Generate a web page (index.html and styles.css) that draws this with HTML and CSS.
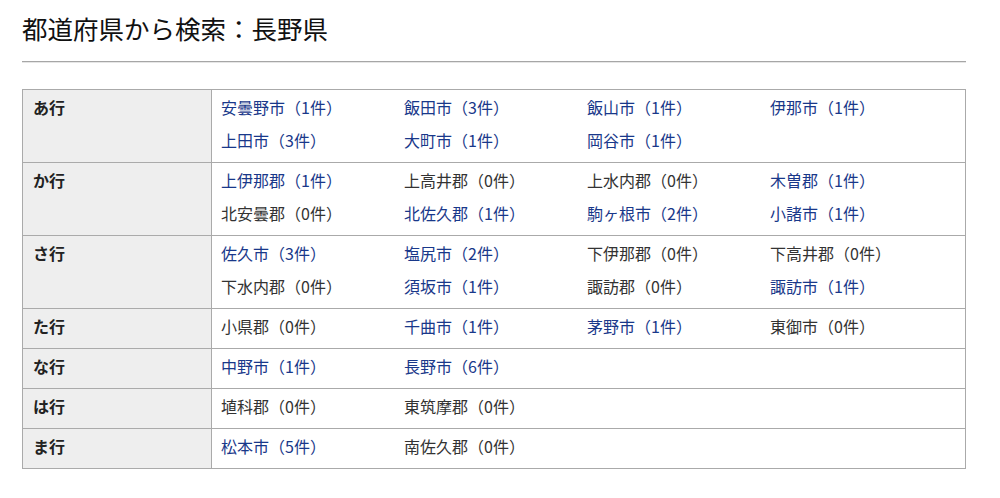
FILE: index.html
```html
<!DOCTYPE html>
<html lang="ja">
<head>
<meta charset="utf-8">
<title>都道府県から検索：長野県</title>
<link rel="stylesheet" href="styles.css">
</head>
<body>
<div class="page">
  <h1 class="title">都道府県から検索：長野県</h1>
  <hr class="rule">
  <table class="areas">
    <tr>
      <th class="kana">あ行</th>
      <td class="cities"><ul class="city-list">
        <li><a class="city" href="#">安曇野市（1件）</a></li>
        <li><a class="city" href="#">飯田市（3件）</a></li>
        <li><a class="city" href="#">飯山市（1件）</a></li>
        <li><a class="city" href="#">伊那市（1件）</a></li>
        <li><a class="city" href="#">上田市（3件）</a></li>
        <li><a class="city" href="#">大町市（1件）</a></li>
        <li><a class="city" href="#">岡谷市（1件）</a></li>
      </ul></td>
    </tr>
    <tr>
      <th class="kana">か行</th>
      <td class="cities"><ul class="city-list">
        <li><a class="city" href="#">上伊那郡（1件）</a></li>
        <li><span class="city empty">上高井郡（0件）</span></li>
        <li><span class="city empty">上水内郡（0件）</span></li>
        <li><a class="city" href="#">木曽郡（1件）</a></li>
        <li><span class="city empty">北安曇郡（0件）</span></li>
        <li><a class="city" href="#">北佐久郡（1件）</a></li>
        <li><a class="city" href="#">駒ヶ根市（2件）</a></li>
        <li><a class="city" href="#">小諸市（1件）</a></li>
      </ul></td>
    </tr>
    <tr>
      <th class="kana">さ行</th>
      <td class="cities"><ul class="city-list">
        <li><a class="city" href="#">佐久市（3件）</a></li>
        <li><a class="city" href="#">塩尻市（2件）</a></li>
        <li><span class="city empty">下伊那郡（0件）</span></li>
        <li><span class="city empty">下高井郡（0件）</span></li>
        <li><span class="city empty">下水内郡（0件）</span></li>
        <li><a class="city" href="#">須坂市（1件）</a></li>
        <li><span class="city empty">諏訪郡（0件）</span></li>
        <li><a class="city" href="#">諏訪市（1件）</a></li>
      </ul></td>
    </tr>
    <tr>
      <th class="kana">た行</th>
      <td class="cities"><ul class="city-list">
        <li><span class="city empty">小県郡（0件）</span></li>
        <li><a class="city" href="#">千曲市（1件）</a></li>
        <li><a class="city" href="#">茅野市（1件）</a></li>
        <li><span class="city empty">東御市（0件）</span></li>
      </ul></td>
    </tr>
    <tr>
      <th class="kana">な行</th>
      <td class="cities"><ul class="city-list">
        <li><a class="city" href="#">中野市（1件）</a></li>
        <li><a class="city" href="#">長野市（6件）</a></li>
      </ul></td>
    </tr>
    <tr>
      <th class="kana">は行</th>
      <td class="cities"><ul class="city-list">
        <li><span class="city empty">埴科郡（0件）</span></li>
        <li><span class="city empty">東筑摩郡（0件）</span></li>
      </ul></td>
    </tr>
    <tr>
      <th class="kana">ま行</th>
      <td class="cities"><ul class="city-list">
        <li><a class="city" href="#">松本市（5件）</a></li>
        <li><span class="city empty">南佐久郡（0件）</span></li>
      </ul></td>
    </tr>
  </table>
</div>
</body>
</html>
```

FILE: styles.css
```css
html, body {
  margin: 0;
  padding: 0;
  background: #fff;
}

body {
  font-family: "Noto Sans CJK JP", "Noto Sans", sans-serif;
  color: #222;
}

.page {
  width: 944px;
  padding: 10px 0 0 22px;
}

.title {
  margin: 0;
  font-size: 25.5px;
  line-height: 36px;
  font-weight: normal;
  color: #111;
}

.rule {
  margin: 15px 0 26px;
  height: 0;
  border: 0;
  border-top: 1px solid #a6a6a6;
  border-bottom: 1px solid #e6e6e6;
}

.areas {
  width: 944px;
  border-collapse: collapse;
  border: 1px solid #aaa;
}

.kana,
.cities {
  border: 1px solid #aaa;
  vertical-align: top;
  font-size: 16px;
}

.kana {
  width: 168px;
  padding: 5px 10px 10px;
  background: #eee;
  text-align: left;
  font-weight: bold;
  line-height: 24px;
  color: #222;
}

.cities {
  padding: 5px 12px 10px 9px;
}

.city-list {
  list-style: none;
  margin: 0;
  padding: 0;
  display: grid;
  grid-template-columns: repeat(4, 1fr);
  row-gap: 9px;
  line-height: 24px;
}

.city {
  color: #19388a;
  text-decoration: none;
  white-space: nowrap;
}

.city.empty {
  color: #333;
}
```
